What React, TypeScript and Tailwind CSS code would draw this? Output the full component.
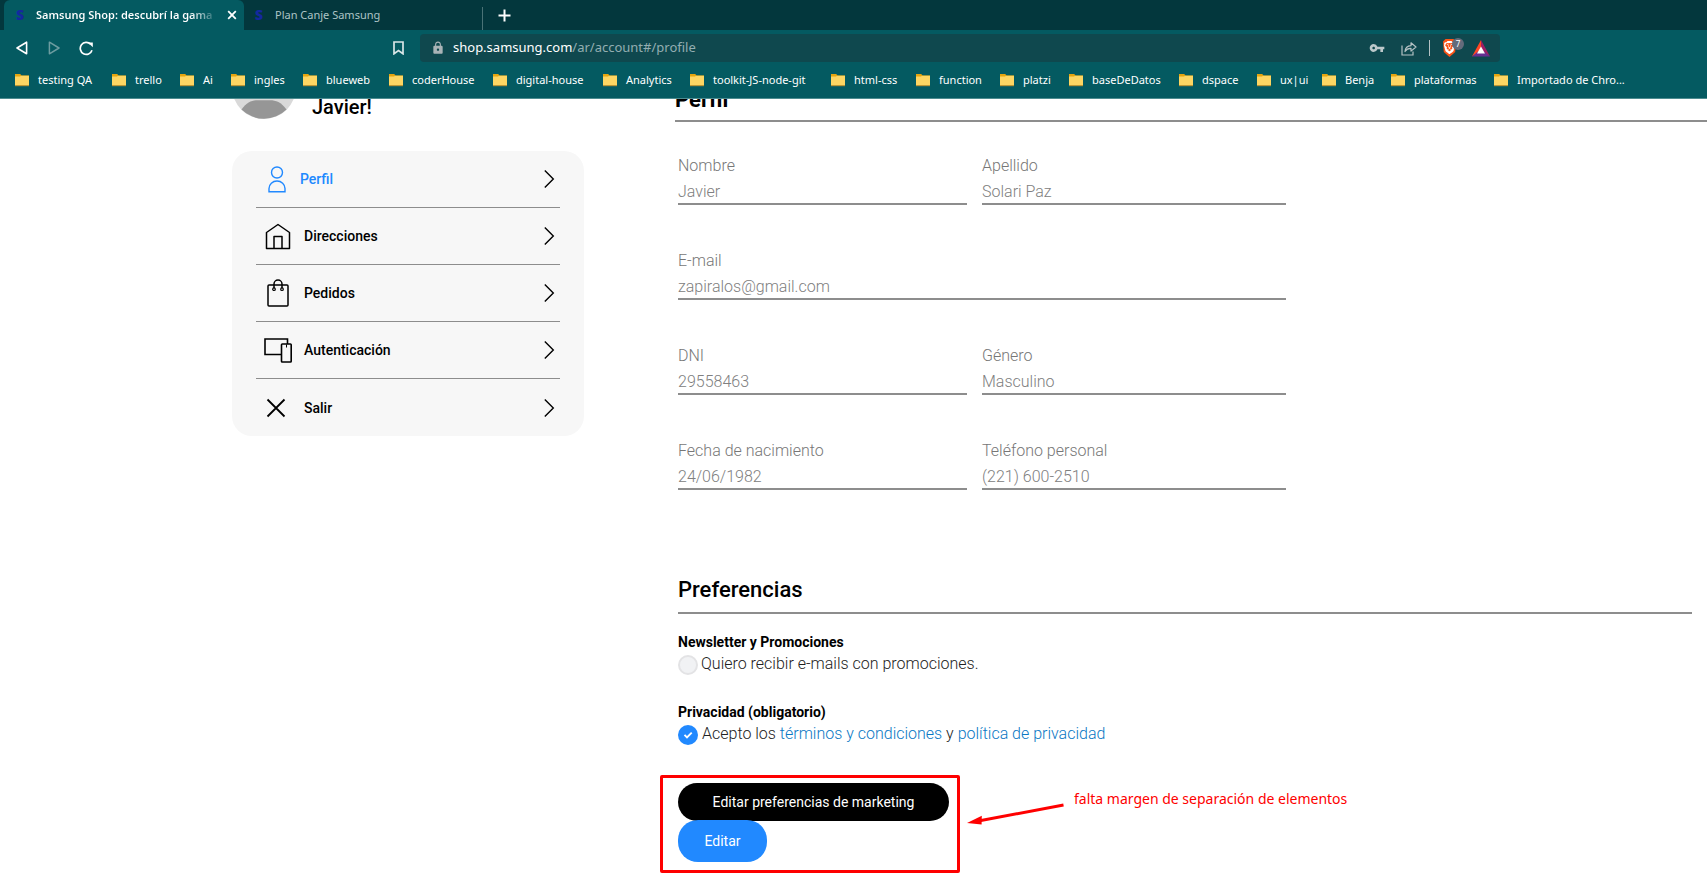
import type { ReactNode } from "react";
import { MdVpnKey, MdLock } from "react-icons/md";
import { SiBrave } from "react-icons/si";

const bookmarks = [
  { name: "testing QA", width: "w-[97px]" },
  { name: "trello", width: "w-[68px]" },
  { name: "Ai", width: "w-[51px]" },
  { name: "ingles", width: "w-[72px]" },
  { name: "blueweb", width: "w-[86px]" },
  { name: "coderHouse", width: "w-[104px]" },
  { name: "digital-house", width: "w-[110px]" },
  { name: "Analytics", width: "w-[87px]" },
  { name: "toolkit-JS-node-git", width: "w-[141px]" },
  { name: "html-css", width: "w-[85px]" },
  { name: "function", width: "w-[84px]" },
  { name: "platzi", width: "w-[69px]" },
  { name: "baseDeDatos", width: "w-[110px]" },
  { name: "dspace", width: "w-[78px]" },
  { name: "ux|ui", width: "w-[65px]" },
  { name: "Benja", width: "w-[69px]" },
  { name: "plataformas", width: "w-[103px]" },
  { name: "Importado de Chro...", width: "w-[150px]" },
];

function FolderIcon() {
  return (
    <svg width="16" height="16" viewBox="0 0 16 16" className="shrink-0" aria-hidden="true">
      <path d="M1 2h5.200l1.300 1.600H15V14H1z" fill="#e5a50f" />
      <path d="M1 4.600h5l1.200-.8H15v9.600H1z" fill="#fdd663" />
      <path d="M1 13.200h14v1H1z" fill="#b08c35" />
    </svg>
  );
}

function BrowserChrome() {
  return (
    <header className="bg-[#045a61] font-['Noto_Sans','Open_Sans',sans-serif] text-white">
      <div className="flex h-[30px] bg-[#03373d] pl-1">
        <div className="flex w-[240px] items-center rounded-t-md bg-[#045a61] pl-3 pr-1">
          <span className="w-5 text-sm font-black text-[#1428a0]">S</span>
          <span className="w-[182px] overflow-hidden whitespace-nowrap bg-linear-to-r from-white from-85% to-transparent bg-clip-text text-[11px] font-semibold text-transparent">
            Samsung Shop: descubrí la gama
          </span>
          <button type="button" aria-label="Cerrar" className="ml-auto flex h-4 w-4 items-center justify-center">
            <svg width="10" height="10" viewBox="0 0 10 10" stroke="#fff" strokeWidth="1.8" fill="none">
              <path d="M1.200 1.200l7.600 7.600M8.800 1.200L1.200 8.800" />
            </svg>
          </button>
        </div>
        <div className="flex w-[239px] items-center pl-[11px]">
          <span className="w-5 text-sm font-black text-[#1428a0]">S</span>
          <span className="text-[11px] text-[#adc4c6]">Plan Canje Samsung</span>
          <span className="ml-auto mt-[7px] w-px self-stretch bg-[#4a7276]" />
        </div>
        <button type="button" aria-label="Nueva pestaña" className="flex w-[43px] items-center justify-center">
          <svg width="13" height="13" viewBox="0 0 13 13" stroke="#fff" strokeWidth="2" fill="none">
            <path d="M6.500 .5v12M.5 6.500h12" />
          </svg>
        </button>
      </div>

      <div className="flex h-9 items-center pl-4 pr-[207px]">
        <div className="flex flex-1 items-center">
          <button type="button" aria-label="Atrás" className="w-8">
            <svg width="12" height="14" viewBox="0 0 12 14" fill="none" stroke="#fff" strokeWidth="1.6" strokeLinejoin="round">
              <path d="M10.600 1.200v11.600L1 7z" />
            </svg>
          </button>
          <button type="button" aria-label="Adelante" className="w-[31px]">
            <svg width="12" height="14" viewBox="0 0 12 14" fill="none" stroke="#6c9ca0" strokeWidth="1.5" strokeLinejoin="round">
              <path d="M1.400 1.200v11.600L11 7z" />
            </svg>
          </button>
          <button type="button" aria-label="Recargar">
            <svg width="15" height="15" viewBox="0 0 15 15" fill="none" stroke="#fff" strokeWidth="1.7">
              <path d="M11.600 3.200A6 6 0 1 0 13 9.200" />
              <path d="M9 1.600h4.800v4.600z" fill="#fff" stroke="none" />
            </svg>
          </button>
          <button type="button" aria-label="Guardar en marcadores" className="ml-auto mr-4">
            <svg width="11" height="14" viewBox="0 0 11 14" fill="none" stroke="#d9e6e7" strokeWidth="1.7">
              <path d="M1 1h9v11.800L5.500 9.600 1 12.800z" />
            </svg>
          </button>
        </div>
        <div className="flex h-7 w-[1080px] items-center rounded bg-[#0f484e] pl-[11px] pr-[10px]">
          <MdLock className="h-[14px] w-[14px] text-[#a9b3b6]" />
          <p className="ml-2 text-[13px]">
            shop.samsung.com<span className="text-[#93aeb1]">/ar/account#/profile</span>
          </p>
          <div className="ml-auto flex items-center">
            <MdVpnKey className="h-4 w-4 text-[#bcc8ca]" />
            <svg width="16" height="15" viewBox="0 0 16 15" className="ml-4" fill="none" stroke="#b5c2c4" strokeWidth="1.2">
              <path d="M1 4.500V14h11v-3.500" />
              <path d="M4 10.500c.3-3.500 2.300-5.600 6-5.800V1.800L15 6l-5 4.100V7.400c-2.700-.1-4.500.8-6 3.100z" strokeLinejoin="round" />
            </svg>
            <span className="ml-3 h-4 w-px bg-[#b5c2c4]" />
            <span className="relative ml-3 flex h-5 w-[22px] items-center">
              <svg width="15" height="20" viewBox="0 0 15 20" className="absolute left-0 top-0">
                <path d="M3.500 1h8l2.500 2.500-.8 10.500L7.500 19 1.800 14 1 3.500z" fill="#fb5416" />
              </svg>
              <SiBrave className="absolute left-px top-[3px] h-[13px] w-[13px] text-white" />
              <span className="absolute left-[10px] top-0 flex h-3 w-3 items-center justify-center rounded-full bg-[#636b7b] text-[8px] leading-3">7</span>
            </span>
            <svg width="18" height="17" viewBox="0 0 18 17" className="ml-2">
              <path d="M9 0L0 16.500l9-5.500z" fill="#ff4724" />
              <path d="M9 0l9 16.500L9 11z" fill="#9e1f63" />
              <path d="M0 16.500h18L9 9z" fill="#662d91" />
              <path d="M9 6.500l4 7H5z" fill="#fff" />
            </svg>
          </div>
        </div>
      </div>

      <nav className="flex h-[33px] items-center border-b border-[#4d8c90] pb-1 pl-[14px]">
        {bookmarks.map((b) => (
          <a key={b.name} href="#" className={`flex shrink-0 items-center gap-2 whitespace-nowrap text-[11px] ${b.width}`}>
            <FolderIcon />
            {b.name}
          </a>
        ))}
      </nav>
    </header>
  );
}

function MenuRow({ label, icon, active, last }: { label: string; icon: ReactNode; active?: boolean; last?: boolean }) {
  return (
    <a
      href="#"
      className={`flex h-[57px] items-center text-sm font-medium ${last ? "" : "border-b border-[#8d8d8d]"} ${
        active ? "gap-2 text-[#2189ff]" : "gap-3 text-black"
      }`}
    >
      <span className="ml-2 flex w-7 justify-center">{icon}</span>
      {label}
      <svg width="12" height="20" viewBox="0 0 12 20" className="ml-auto mr-1" fill="none" stroke="#000" strokeWidth="1.4">
        <path d="M.8 1.500L9.300 10l-8.500 8.500" />
      </svg>
    </a>
  );
}

function Sidebar() {
  return (
    <aside className="w-[352px] shrink-0">
      <div className="flex h-[52px] items-start gap-4">
        <svg width="64" height="20" viewBox="0 44 64 20" aria-hidden="true">
          <circle cx="32" cy="32" r="32" fill="#d9d9d9" />
          <path d="M9.500 54.500C15 47 20 45.200 26 45.200h12c6 0 11 1.800 16.500 9.300A32 32 0 0 1 9.500 54.500z" fill="#969696" />
        </svg>
        <p className="-mt-1 text-xl leading-6 font-medium text-black">Javier!</p>
      </div>
      <nav className="rounded-[20px] bg-[#f7f7f7] px-6">
        <MenuRow
          label="Perfil"
          active
          icon={
            <svg width="18" height="27" viewBox="0 0 18 27" className="mr-0.5" fill="none" stroke="#2189ff" strokeWidth="1.4">
              <circle cx="9" cy="6.500" r="5.500" />
              <path d="M1 25.800v-3.300a8 7.500 0 0 1 16 0v3.300z" />
            </svg>
          }
        />
        <MenuRow
          label="Direcciones"
          icon={
            <svg width="26" height="27" viewBox="0 0 26 27" fill="none" stroke="#000" strokeWidth="1.5" strokeLinejoin="round">
              <path d="M1.500 9.500L13 1.500l11.500 8V25.500h-23z" />
              <path d="M9 25.500V13.500h8v12" />
            </svg>
          }
        />
        <MenuRow
          label="Pedidos"
          icon={
            <svg width="22" height="28" viewBox="0 0 22 28" fill="none" stroke="#000" strokeWidth="1.5">
              <rect x="1" y="6" width="20" height="21" rx="1" />
              <path d="M7 9V5a4 4 0 0 1 8 0v4" />
              <circle cx="7" cy="10.200" r="1.300" strokeWidth="1.2" />
              <circle cx="15" cy="10.200" r="1.300" strokeWidth="1.2" />
            </svg>
          }
        />
        <MenuRow
          label="Autenticación"
          icon={
            <svg width="28" height="25" viewBox="0 0 28 25" fill="none" stroke="#000" strokeWidth="1.6">
              <path d="M23.500 6V1H1v15.500h16.500" />
              <rect x="17.500" y="6" width="9.700" height="18" rx=".8" />
              <path d="M22.500 6.500v3" strokeWidth="1" />
            </svg>
          }
        />
        <MenuRow
          label="Salir"
          last
          icon={
            <svg width="20" height="20" viewBox="0 0 20 20" className="mr-1" fill="none" stroke="#000" strokeWidth="1.8">
              <path d="M1.500 1.500l17 17M18.500 1.500l-17 17" />
            </svg>
          }
        />
      </nav>
    </aside>
  );
}

function Field({ id, label, value, wide }: { id: string; label: string; value: string; wide?: boolean }) {
  return (
    <div className={wide ? "col-span-2" : ""}>
      <label htmlFor={id} className="block text-base leading-[26px] font-light text-[#777]">
        {label}
      </label>
      <input
        id={id}
        type="text"
        readOnly
        defaultValue={value}
        className="block h-[26px] w-full border-b-2 border-[#8d8d8d] bg-transparent p-0 text-base font-light text-[#808080] outline-none"
      />
    </div>
  );
}

export default function App() {
  return (
    <div className="flex min-h-screen flex-col bg-white font-[Roboto,'Open_Sans',sans-serif]">
      <BrowserChrome />
      <main className="flex flex-1 gap-[91px] overflow-hidden pl-[232px]">
        <Sidebar />
        <div className="min-w-0 flex-1">
          <h1 className="-mt-[13px] h-9 border-b-2 border-[#8d8d8d] text-[22px] leading-7 font-bold text-black">Perfil</h1>

          <div className="pl-[3px]">
            <form className="mt-[31px] grid max-w-[608px] grid-cols-[289fr_304fr] gap-x-[15px] gap-y-[43px]">
              <Field id="nombre" label="Nombre" value="Javier" />
              <Field id="apellido" label="Apellido" value="Solari Paz" />
              <Field id="email" label="E-mail" value="zapiralos@gmail.com" wide />
              <Field id="dni" label="DNI" value="29558463" />
              <Field id="genero" label="Género" value="Masculino" />
              <Field id="nacimiento" label="Fecha de nacimiento" value="24/06/1982" />
              <Field id="telefono" label="Teléfono personal" value="(221) 600-2510" />
            </form>

            <h2 className="mr-[15px] mt-[86px] border-b-2 border-[#8d8d8d] pb-2 text-[22px] leading-7 font-medium text-black">Preferencias</h2>

            <section className="mt-[18px]">
              <h3 className="text-sm leading-5 font-bold text-black">Newsletter y Promociones</h3>
              <label className="flex h-6 items-center gap-[3px] text-base font-light text-[#222]">
                <input type="checkbox" className="mt-0.5 h-5 w-5 appearance-none rounded-full border-2 border-[#e3e3e5] bg-[#f1f2f4]" />
                Quiero recibir e-mails con promociones.
              </label>
            </section>

            <section className="mt-[26px]">
              <h3 className="text-sm leading-5 font-bold text-black">Privacidad (obligatorio)</h3>
              <div className="flex h-6 items-center gap-1 text-base font-light text-[#222]">
                <span className="relative mt-0.5 h-5 w-5">
                  <input id="privacidad" type="checkbox" defaultChecked className="block h-5 w-5 appearance-none rounded-full bg-[#2189ff]" />
                  <svg width="20" height="20" viewBox="0 0 20 20" className="pointer-events-none absolute left-0 top-0" fill="none" stroke="#fff" strokeWidth="1.9">
                    <path d="M6.500 9.800l2.500 2.500 4.700-4.700" />
                  </svg>
                </span>
                <label htmlFor="privacidad">
                  Acepto los{" "}
                  <a href="#" className="text-[#0a78c4]">términos y condiciones</a> y{" "}
                  <a href="#" className="text-[#0a78c4]">política de privacidad</a>
                </label>
              </div>
            </section>

            <div className="relative mt-[37px] flex w-[271px] flex-col items-start">
              <button type="button" className="h-[38px] w-full rounded-[19px] bg-black text-sm text-white">
                Editar preferencias de marketing
              </button>
              <button type="button" className="-mt-px h-[42px] w-[89px] rounded-[20px] bg-[#2189ff] text-sm text-white">
                Editar
              </button>
              <div className="pointer-events-none absolute -top-2 -left-[18px] h-[98px] w-[300px] rounded-xs border-3 border-[#fe0000]" />
              <div className="pointer-events-none absolute left-[289px] top-1 flex items-start gap-[7px]">
                <svg width="100" height="40" viewBox="0 0 100 40" className="shrink-0">
                  <path d="M10 34.300L96.500 18" stroke="#fe0000" strokeWidth="3" fill="none" />
                  <path d="M0 36l14.800-7.200-.2 8.800z" fill="#fe0000" />
                </svg>
                <p className="font-['Noto_Sans',sans-serif] text-sm leading-6 whitespace-nowrap text-[#fe0000]">falta margen de separación de elementos</p>
              </div>
            </div>
          </div>
        </div>
      </main>
    </div>
  );
}
